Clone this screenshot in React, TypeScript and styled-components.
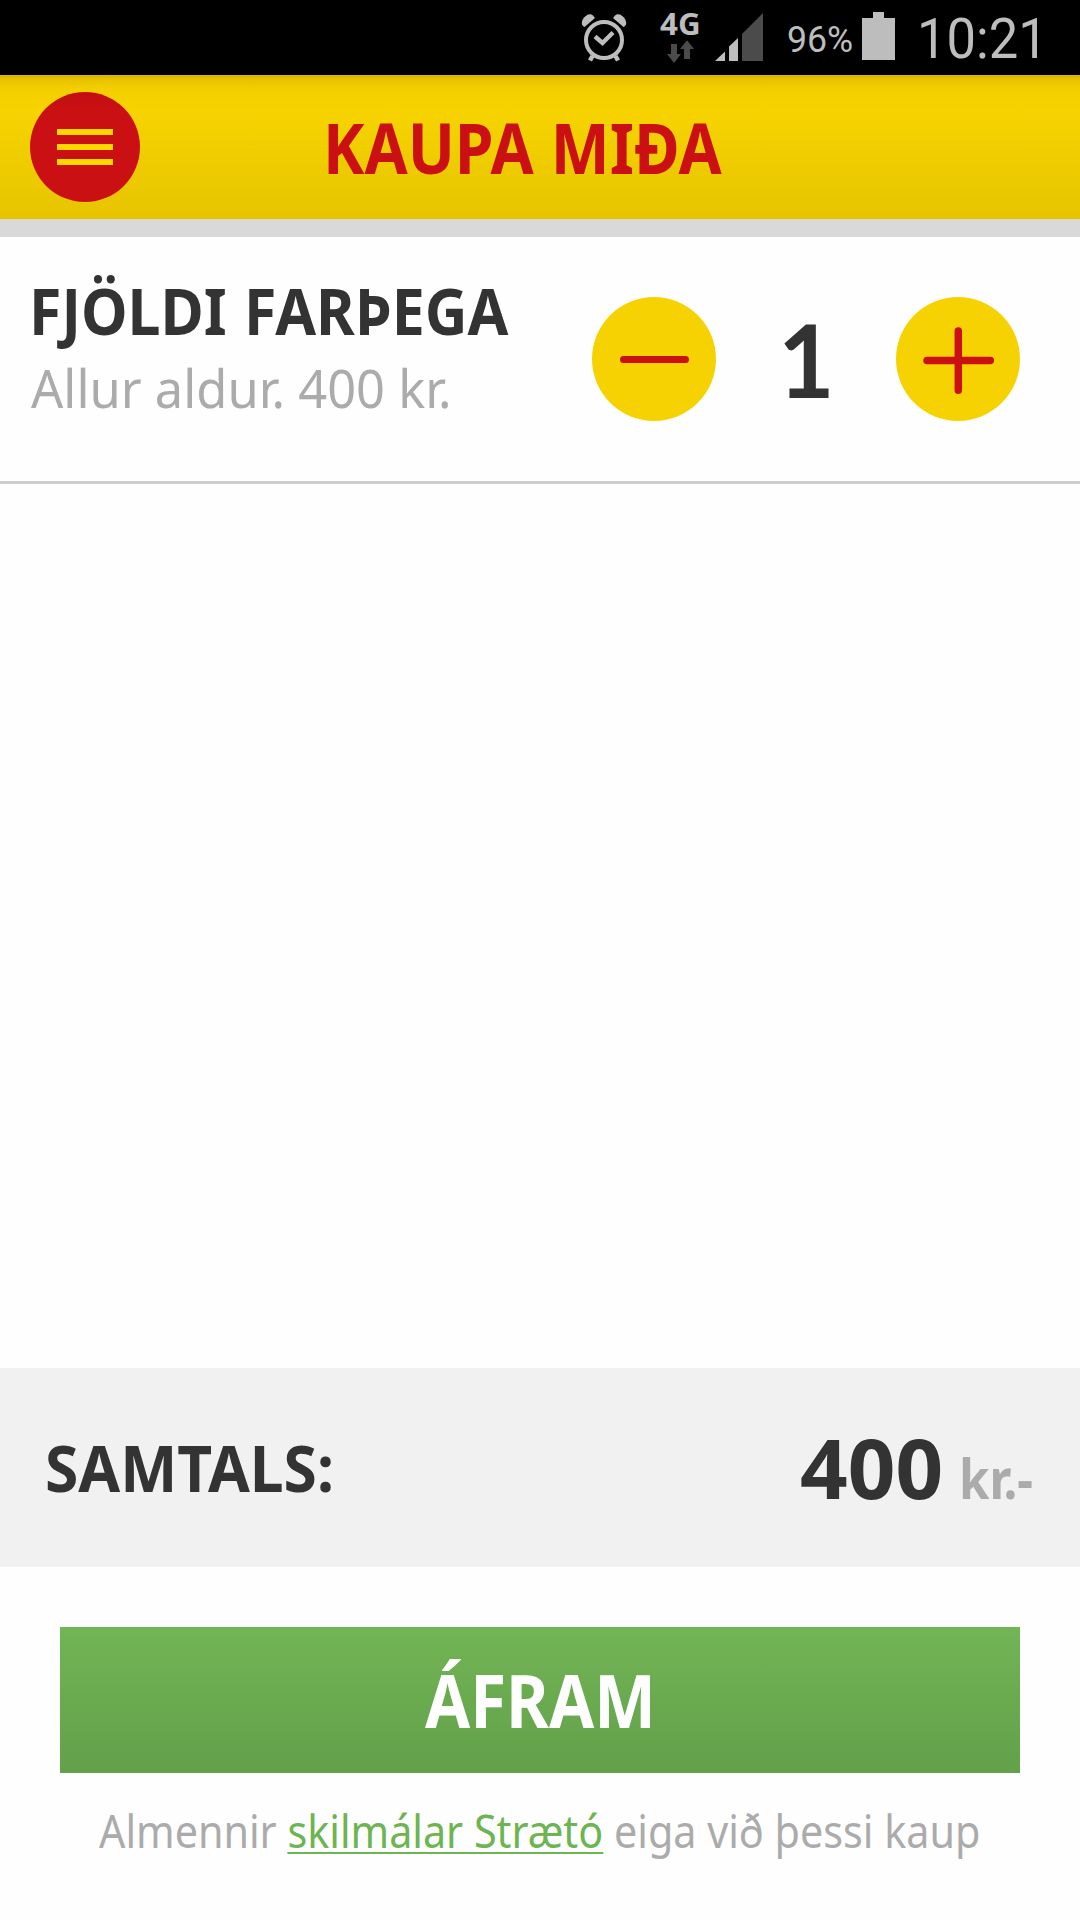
import React, { useState } from "react";
import styled, { createGlobalStyle, css } from "styled-components";

const colors = {
  red: "#cb1013",
  yellow: "#f6d203",
  ink: "#333333",
  muted: "#ababab",
  status: "#bdbdbd",
  statusDim: "#4b4b4b",
  green: "#6db552",
};

const GlobalStyle = createGlobalStyle`
  * { box-sizing: border-box; }
  body { margin: 0; background: #fefefe; }
  button { border: 0; padding: 0; font: inherit; cursor: pointer; }
`;

const Screen = styled.div`
  display: flex;
  flex-direction: column;
  width: 1080px;
  height: 1920px;
  overflow: hidden;
  background: #fefefe;
  font-family: "Noto Sans", "Open Sans", sans-serif;
`;

/* Condensed lettering: the glyphs are narrowed horizontally inside a slot of fixed width. */
const condensed = css<{ $width: number; $scale: number }>`
  display: block;
  flex: none;
  width: ${(p) => p.$width}px;
  white-space: nowrap;
  transform: scaleX(${(p) => p.$scale});
  transform-origin: 0 50%;
`;

const StatusBar = styled.div`
  display: flex;
  flex: none;
  align-items: flex-start;
  height: 75px;
  padding-left: 580px;
  background: #000;
  color: ${colors.status};
`;

const StatusIcon = styled.svg<{ $gap?: number }>`
  display: block;
  flex: none;
  margin-right: ${(p) => p.$gap ?? 0}px;
`;

const Network = styled.div`
  display: flex;
  flex-direction: column;
  width: 40px;
  margin-right: 14px;
`;

const NetworkType = styled.span`
  ${condensed}
  height: 40px;
  font-size: 31px;
  font-weight: 700;
  line-height: 46px;
`;

const BatteryLevel = styled.span`
  ${condensed}
  font: 400 36px/80px Roboto, sans-serif;
`;

const Clock = styled.span`
  ${condensed}
  font: 375 55px/79px Roboto, sans-serif;
`;

const Header = styled.header`
  display: flex;
  flex: none;
  align-items: center;
  height: 162px;
  padding-left: 30px;
  border-bottom: 18px solid #d9d9d9;
  background:
    linear-gradient(rgba(150, 110, 0, 0.3) 3px, rgba(150, 110, 0, 0.22) 3px, rgba(160, 120, 0, 0.08) 14px, rgba(160, 120, 0, 0) 36px),
    linear-gradient(#fcd800, #e6c400) 0 0 / 100% 144px no-repeat;
`;

const MenuButton = styled.button`
  display: flex;
  flex: none;
  flex-direction: column;
  align-items: center;
  justify-content: center;
  gap: 9px;
  width: 110px;
  height: 110px;
  border-radius: 50%;
  background: linear-gradient(#c20f13, ${colors.red} 20px);
`;

const MenuBar = styled.span`
  width: 56px;
  height: 6px;
  background: #ffd800;
`;

const Title = styled.h1`
  ${condensed}
  margin: 0 0 0 182.6px;
  color: ${colors.red};
  font-size: 70px;
  font-weight: 700;
  line-height: 144px;
  word-spacing: 1px;
`;

const PassengerRow = styled.section`
  display: flex;
  flex: none;
  height: 247px;
  border-bottom: 3px solid #cccccc;
`;

const PassengerInfo = styled.div`
  width: 592px;
  padding: 33px 0 0 29px;
`;

const PassengerTitle = styled.h2`
  ${condensed}
  margin: 0;
  color: ${colors.ink};
  font-size: 64.5px;
  font-weight: 700;
  line-height: 80px;
  word-spacing: 2px;
`;

const PassengerPrice = styled.p`
  ${condensed}
  margin: 0 0 0 2px;
  color: ${colors.muted};
  font-size: 53px;
  line-height: 75px;
`;

const Stepper = styled.div`
  display: flex;
  justify-content: space-between;
  width: 428px;
  height: 124px;
  margin-top: 60px;
`;

const StepButton = styled.button`
  width: 124px;
  height: 124px;
  border-radius: 50%;
  background: ${colors.yellow};
`;

const Count = styled.output`
  ${condensed}
  color: ${colors.ink};
  font: 700 102px/124px Lato, sans-serif;
`;

const Spacer = styled.div`
  flex: 1;
`;

const TotalBar = styled.section`
  display: flex;
  flex: none;
  align-items: flex-start;
  height: 199px;
  padding-left: 45px;
  background: #f1f1f1;
`;

const TotalLabel = styled.span`
  ${condensed}
  color: ${colors.ink};
  font-size: 64.5px;
  font-weight: 700;
  line-height: 198px;
`;

const TotalAmount = styled.span`
  ${condensed}
  color: ${colors.ink};
  font-size: 83px;
  font-weight: 700;
  line-height: 198px;
`;

const Currency = styled.span`
  ${condensed}
  color: ${colors.muted};
  font-size: 56px;
  font-weight: 700;
  line-height: 100px;
`;

const TotalValue = styled.div`
  display: flex;
  align-items: baseline;
  margin-left: 455px;
`;

const Footer = styled.footer`
  flex: none;
  height: 353px;
  padding: 60px 60px 0;
`;

const ContinueButton = styled.button`
  display: block;
  width: 960px;
  height: 146px;
  padding-left: 365.3px;
  background: linear-gradient(#71b555, #63a04a);
  color: #fff;
  text-align: left;
`;

const ContinueLabel = styled.span`
  ${condensed}
  font-size: 74px;
  font-weight: 700;
  line-height: 146px;
`;

const Terms = styled.p`
  ${condensed}
  margin: 25px 0 0 39px;
  color: ${colors.muted};
  font-size: 45px;
  line-height: 66px;
`;

const TermsLink = styled.a`
  color: ${colors.green};
  text-decoration: underline;
  text-decoration-thickness: 2px;
  text-underline-offset: 4px;
  text-decoration-skip-ink: none;
`;

function AlarmIcon() {
  return (
    <StatusIcon width="80" height="75" viewBox="580 0 80 75" fill="none" stroke={colors.status}>
      <circle cx="604" cy="40" r="18" strokeWidth="4" />
      <path d="M595 36.5 602.5 43 613 32.5" strokeWidth="4.4" />
      <path d="M592.5 56 590 60.5M615.5 56 618 60.5" strokeWidth="4.5" />
      <path d="M582 21.5Q583 17 588 14.5Q591 13.5 593 15.5L595 18 584.5 27Q581 25 582 21.5ZM626 21.5Q625 17 620 14.5Q617 13.5 615 15.5L613 18 623.5 27Q627 25 626 21.5Z" fill={colors.status} stroke="none" />
    </StatusIcon>
  );
}

function DataArrows() {
  return (
    <StatusIcon width="40" height="35" viewBox="660 40 40 35" fill={colors.statusDim}>
      <path d="M671 44h6v10h4l-7 9-7-9h4z" />
      <path d="M687 40.3 694 49h-4v10h-6V49h-4z" />
    </StatusIcon>
  );
}

function SignalIcon() {
  return (
    <StatusIcon width="50" height="75" viewBox="714 0 50 75" fill={colors.status} $gap={23.3}>
      <path d="M715 61 725 51.5V61z" />
      <path d="M729 61V46.5L738 38v23z" />
      <path d="M742 61V34L763 13v48z" fill={colors.statusDim} />
    </StatusIcon>
  );
}

function BatteryIcon() {
  return (
    <StatusIcon width="35" height="75" viewBox="861 0 35 75" fill={colors.status} $gap={21}>
      <path d="M862 18h11v-6h11v6h11v42h-33z" />
    </StatusIcon>
  );
}

const PRICE = 400;

export default function App() {
  const [count, setCount] = useState(1);

  return (
    <>
      <GlobalStyle />
      <Screen>
        <StatusBar>
          <AlarmIcon />
          <Network>
            <NetworkType $width={40} $scale={1.01}>4G</NetworkType>
            <DataArrows />
          </Network>
          <SignalIcon />
          <BatteryLevel $width={73.7} $scale={0.99}>96%</BatteryLevel>
          <BatteryIcon />
          <Clock $width={120} $scale={0.955}>10:21</Clock>
        </StatusBar>

        <Header>
          <MenuButton aria-label="Valmynd">
            <MenuBar />
            <MenuBar />
            <MenuBar />
          </MenuButton>
          <Title $width={446} $scale={0.892}>KAUPA MIÐA</Title>
        </Header>

        <PassengerRow>
          <PassengerInfo>
            <PassengerTitle $width={520} $scale={0.915}>FJÖLDI FARÞEGA</PassengerTitle>
            <PassengerPrice $width={440} $scale={0.955}>Allur aldur. 400 kr.</PassengerPrice>
          </PassengerInfo>
          <Stepper>
            <StepButton aria-label="Fækka" onClick={() => setCount(Math.max(1, count - 1))}>
              <svg width="124" height="124" stroke={colors.red} strokeWidth="7" strokeLinecap="round">
                <path d="M31.5 62.5H93.5" />
              </svg>
            </StepButton>
            <Count $width={56.8} $scale={0.957}>{count}</Count>
            <StepButton aria-label="Fjölga" onClick={() => setCount(count + 1)}>
              <svg width="124" height="124" stroke={colors.red} strokeWidth="7.5" strokeLinecap="round">
                <path d="M31 63.5H94.3M62.3 34V93.3" />
              </svg>
            </StepButton>
          </Stepper>
        </PassengerRow>

        <Spacer />

        <TotalBar>
          <TotalLabel $width={300} $scale={0.938}>SAMTALS:</TotalLabel>
          <TotalValue>
            <TotalAmount $width={158.8} $scale={1.005}>{count * PRICE}</TotalAmount>
            <Currency $width={80} $scale={0.877}>kr.-</Currency>
          </TotalValue>
        </TotalBar>

        <Footer>
          <ContinueButton>
            <ContinueLabel $width={262} $scale={0.883}>ÁFRAM</ContinueLabel>
          </ContinueButton>
          <Terms $width={920} $scale={0.9175}>
            Almennir <TermsLink>skilmálar Strætó</TermsLink> eiga við þessi kaup
          </Terms>
        </Footer>
      </Screen>
    </>
  );
}
